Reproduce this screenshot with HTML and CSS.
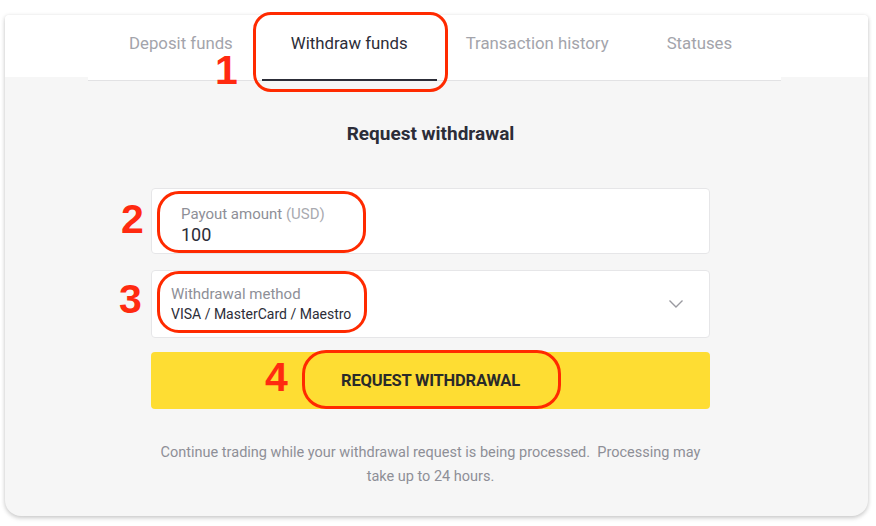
FILE: index.html
```html
<!DOCTYPE html>
<html>
<head>
<meta charset="utf-8">
<link rel="stylesheet" href="styles.css">
</head>
<body>
<div class="page">
  <div class="card">
    <div class="header">
      <nav class="tabs">
        <a class="tab"><span>Deposit funds</span></a>
        <a class="tab active"><span>Withdraw funds</span></a>
        <a class="tab"><span>Transaction history</span></a>
        <a class="tab"><span>Statuses</span></a>
      </nav>
    </div>
    <div class="content">
      <h1 class="title">Request withdrawal</h1>
      <div class="form">
        <div class="field amount">
          <div class="label">Payout amount <span class="unit">(USD)</span></div>
          <div class="value big">100</div>
        </div>
        <div class="field method">
          <div class="field-text">
            <div class="label">Withdrawal method</div>
            <div class="value">VISA / MasterCard / Maestro</div>
          </div>
          <svg class="chevron" width="16" height="10" viewBox="0 0 16 10"><path d="M1.5 1.5 L8 8 L14.5 1.5" fill="none" stroke="#9a9aa0" stroke-width="1.4"/></svg>
        </div>
        <button class="submit">REQUEST WITHDRAWAL</button>
      </div>
      <p class="note">Continue trading while your withdrawal request is being processed.&nbsp; Processing may take up to 24 hours.</p>
    </div>
  </div>

  <div class="mark box1"></div>
  <div class="mark box2"></div>
  <div class="mark box3"></div>
  <div class="mark box4"></div>
  <div class="num n1">1</div>
  <div class="num n2">2</div>
  <div class="num n3">3</div>
  <div class="num n4">4</div>
</div>
</body>
</html>
```

FILE: styles.css
```css
* { box-sizing: border-box; }
html, body { margin: 0; padding: 0; background: #ffffff; }
body { font-family: Roboto, "Liberation Sans", sans-serif; width: 876px; height: 526px; overflow: hidden; }
.page { position: relative; width: 876px; height: 526px; padding: 15px 8px 0 5px; }

.card {
  width: 863px;
  height: 501px;
  background: #f6f6f6;
  border-radius: 4px 4px 16px 16px;
  box-shadow: 0 1px 4px rgba(0,0,0,0.18), 0 3px 5px rgba(0,0,0,0.08);
  overflow: hidden;
}
.header { height: 62px; background: #ffffff; }
.tabs {
  position: relative;
  z-index: 1;
  display: flex;
  margin-left: 83px;
  width: 693px;
  height: 66px;
  padding-left: 12px;
  background: #ffffff;
  border-bottom: 1px solid #e2e2e4;
}
.tab {
  display: block;
  padding: 18px 29px 0;
  font-size: 16.8px;
  line-height: 20px;
  color: #a3a4ab;
  white-space: nowrap;
}
.tab span { display: block; }
.tab.active {
  color: #2c2d38;
  border-bottom: 2px solid #2c2d38;
  height: 66px;
}

.content { padding: 45px 0 0 0; }
.title {
  margin: 0 0 42px 0;
  width: 851px;
  text-align: center;
  font-size: 19px;
  font-weight: 700;
  color: #2c2d38;
  line-height: 24px;
}
.form { margin-left: 146px; width: 559px; display: flex; flex-direction: column; }
.field {
  background: #ffffff;
  border: 1px solid #e6e6e8;
  border-radius: 4px;
}
.amount { height: 66px; padding: 16px 29px 0; }
.method {
  height: 68px;
  margin-top: 16px;
  padding: 14px 25px 0 19px;
  display: flex;
  justify-content: space-between;
  align-items: flex-start;
}
.label { font-size: 15px; color: #8e8f97; line-height: 18px; }
.unit { color: #a9aab0; }
.value { font-size: 14px; color: #2c2d38; line-height: 22px; }
.value.big { font-size: 18px; line-height: 24px; }
.chevron { margin-top: 14px; }
.submit {
  margin-top: 14px;
  height: 57px;
  border: none;
  border-radius: 4px;
  background: #fedd33;
  font-family: Roboto, "Liberation Sans", sans-serif;
  font-size: 16.5px;
  font-weight: 700;
  color: #2a2a2a;
  letter-spacing: -0.2px;
}
.note {
  margin: 32px 0 0 143px;
  width: 565px;
  text-align: center;
  font-size: 14.5px;
  line-height: 24px;
  color: #8e8f97;
}

.mark {
  position: absolute;
  z-index: 2;
  border: 3px solid #ff2a00;
  border-radius: 18px;
}
.box1 { left: 253px; top: 12px; width: 195px; height: 80px; }
.box2 { left: 157px; top: 191px; width: 209px; height: 62px; border-radius: 22px; }
.box3 { left: 157px; top: 271px; width: 210px; height: 62px; border-radius: 22px; }
.box4 { left: 302px; top: 350px; width: 259px; height: 59px; border-radius: 24px; }
.num {
  position: absolute;
  z-index: 2;
  font-family: "Liberation Sans", Arial, sans-serif;
  font-weight: 700;
  font-size: 41px;
  line-height: 30px;
  color: #ff2a10;
}
.n1 { left: 215px; top: 55px; }
.n2 { left: 121px; top: 204px; }
.n3 { left: 119px; top: 284px; }
.n4 { left: 265px; top: 362px; }
```
